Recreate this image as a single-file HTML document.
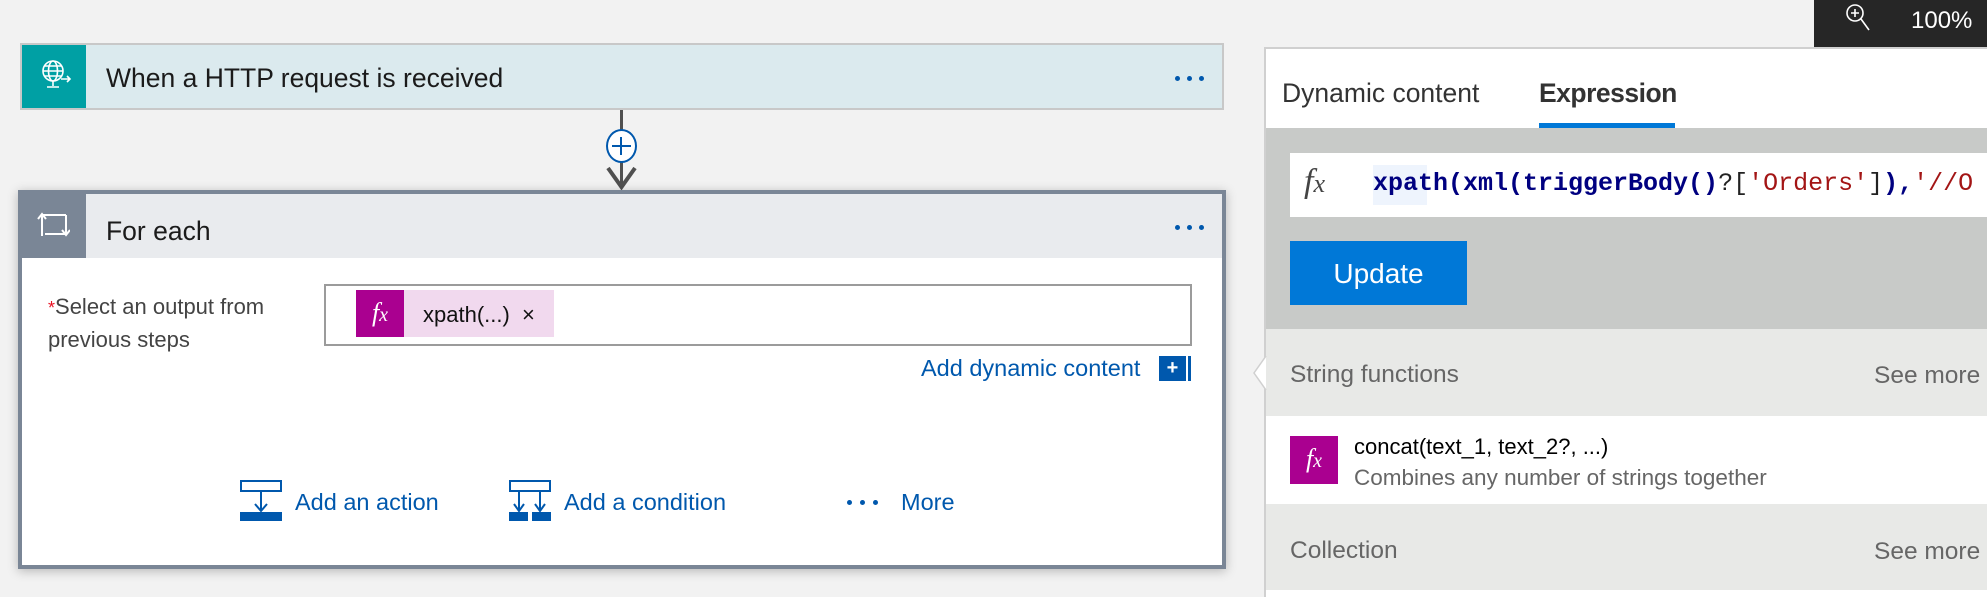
<!DOCTYPE html>
<html><head><meta charset="utf-8"><style>
*{margin:0;padding:0;box-sizing:border-box}
body{width:1987px;height:597px;overflow:hidden;background:#f2f2f2;font-family:"Liberation Sans",sans-serif;position:relative}
.abs{position:absolute}
.dots{position:absolute;display:flex;gap:7px}
.dots i{width:5px;height:5px;border-radius:50%;background:#0058ad;display:block}
</style></head><body>

<div class="abs" style="left:20px;top:43px;width:1204px;height:67px;background:#dbeaee;border:2px solid #c8c8c8"></div>
<div class="abs" style="left:22px;top:45px;width:64px;height:63px;background:#00a0a4"></div>
<svg class="abs" style="left:38px;top:58px" width="36" height="36" viewBox="0 0 36 36" fill="none" stroke="#fff" stroke-width="1.6">
<circle cx="15" cy="13" r="10"/><ellipse cx="15" cy="13" rx="4.5" ry="10"/><path d="M5 13h20M6.5 8h17M6.5 18h17M15 23v5M9 29h12M23 21h9M29 18l3 3-3 3"/></svg>
<div class="abs" style="left:106px;top:63px;font-size:26.5px;color:#1b1b1b">When a HTTP request is received</div>
<div class="dots" style="left:1175px;top:76px"><i></i><i></i><i></i></div>

<div class="abs" style="left:620px;top:110px;width:3px;height:76px;background:#505050"></div>
<div class="abs" style="left:606px;top:129px;width:31px;height:34px;border-radius:50%;background:#fff;border:2px solid #0058ad"></div>
<div class="abs" style="left:612px;top:145px;width:19px;height:2px;background:#0058ad"></div>
<div class="abs" style="left:620px;top:137px;width:2px;height:18px;background:#0058ad"></div>
<svg class="abs" style="left:605px;top:165px" width="33" height="26"><path d="M3 3l13.5 19L30 3" stroke="#505050" stroke-width="4" fill="none"/></svg>

<div class="abs" style="left:18px;top:190px;width:1208px;height:379px;background:#fff;border:4px solid #7a8696;box-shadow:0 2px 10px rgba(0,0,0,.25)"></div>
<div class="abs" style="left:22px;top:194px;width:1200px;height:64px;background:#e9ebee"></div>
<div class="abs" style="left:18px;top:190px;width:68px;height:68px;background:#7a8696"></div>
<svg class="abs" style="left:36px;top:210px" width="34" height="28" fill="none" stroke="#fff" stroke-width="2"><path d="M6 26V5h24M2 9l4-5 4 5M30 5v19H9M26 20l4 5 4-5"/></svg>
<div class="abs" style="left:106px;top:216px;font-size:26.5px;color:#1b1b1b">For each</div>
<div class="dots" style="left:1175px;top:225px"><i></i><i></i><i></i></div>

<div class="abs" style="left:48px;top:291px;font-size:22px;color:#444;line-height:31px"><span style="color:#e81123;font-size:18px">*</span>Select an output from<br>previous steps</div>
<div class="abs" style="left:324px;top:284px;width:868px;height:62px;border:2px solid #9b9b9b;background:#fff"></div>
<div class="abs" style="left:356px;top:290px;width:48px;height:47px;background:#aa0090;color:#fff;font-family:'Liberation Serif',serif;font-style:italic;font-size:26px;text-align:center;line-height:45px">f<span style="font-size:20px">x</span></div>
<div class="abs" style="left:404px;top:290px;width:150px;height:47px;background:#f1d9ee;font-size:22px;color:#111;line-height:49px;padding-left:19px">xpath(...)&nbsp;&nbsp;×</div>

<div class="abs" style="left:921px;top:355px;font-size:23.5px;color:#0058ad">Add dynamic content</div>
<div class="abs" style="left:1159px;top:356px;width:27px;height:25px;background:#0058ad;color:#fff;font-size:20px;font-weight:bold;text-align:center;line-height:24px">+</div>
<div class="abs" style="left:1188px;top:356px;width:3px;height:25px;background:#0058ad"></div>

<svg class="abs" style="left:240px;top:480px" width="44" height="42"><rect x="1" y="1" width="40" height="10" fill="none" stroke="#0058ad" stroke-width="2"/><path d="M21 11v19M15 24l6 7 6-7" stroke="#0058ad" stroke-width="2" fill="none"/><rect x="0" y="32" width="42" height="9" fill="#0058ad"/></svg>
<div class="abs" style="left:295px;top:489px;font-size:23.5px;color:#0058ad">Add an action</div>
<svg class="abs" style="left:509px;top:480px" width="44" height="42"><rect x="1" y="1" width="40" height="10" fill="none" stroke="#0058ad" stroke-width="2"/><path d="M10 11v19M5 24l5 7 5-7M31 11v19M26 24l5 7 5-7" stroke="#0058ad" stroke-width="2" fill="none"/><rect x="0" y="32" width="19" height="9" fill="#0058ad"/><rect x="23" y="32" width="19" height="9" fill="#0058ad"/></svg>
<div class="abs" style="left:564px;top:489px;font-size:23.5px;color:#0058ad">Add a condition</div>
<div class="dots" style="left:847px;top:500px;gap:8px"><i></i><i></i><i></i></div>
<div class="abs" style="left:901px;top:489px;font-size:23.5px;color:#0058ad">More</div>

<div class="abs" style="left:1814px;top:0;width:173px;height:47px;background:#262626"></div>
<svg class="abs" style="left:1843px;top:2px" width="32" height="32" fill="none" stroke="#fff" stroke-width="1.6"><circle cx="12" cy="11" r="8"/><path d="M12 7v8M8 11h8M18 17l8 11"/></svg>
<div class="abs" style="left:1911px;top:7px;font-size:24px;color:#fff">100%</div>

<div class="abs" style="left:1264px;top:47px;width:723px;height:550px;background:#fff;border-left:2px solid #d0d0d0;border-top:2px solid #d0d0d0"></div>
<div class="abs" style="left:1282px;top:78px;font-size:26.5px;color:#333">Dynamic content</div>
<div class="abs" style="left:1539px;top:78px;font-size:26.5px;color:#333;font-weight:bold;letter-spacing:-0.5px">Expression</div>
<div class="abs" style="left:1539px;top:123px;width:136px;height:5px;background:#0078d7"></div>
<div class="abs" style="left:1266px;top:128px;width:721px;height:201px;background:#c8cac8"></div>
<div class="abs" style="left:1290px;top:153px;width:697px;height:64px;background:#fff;overflow:hidden;white-space:nowrap">
<span class="abs" style="left:14px;top:10px;font-family:'Liberation Serif',serif;font-style:italic;font-size:34px;color:#444">f<span style="font-size:26px">x</span></span>
<span class="abs" style="left:83px;top:12px;background:#eef4fd;width:54px;height:40px"></span>
<span class="abs" style="left:83px;top:16px;font-family:'Liberation Mono',monospace;font-size:25px;font-weight:bold;color:#000080">xpath(xml(triggerBody()<span style="color:#222;font-weight:normal">?[</span><span style="color:#a31515;font-weight:normal">'Orders'</span><span style="color:#222;font-weight:normal">]</span>),<span style="color:#a31515;font-weight:normal">'//O</span></span>
</div>
<div class="abs" style="left:1290px;top:241px;width:177px;height:64px;background:#0078d7;color:#fff;font-size:28px;text-align:center;line-height:66px">Update</div>

<div class="abs" style="left:1266px;top:329px;width:721px;height:87px;background:#e8e9e7"></div>
<svg class="abs" style="left:1248px;top:356px" width="20" height="34"><path d="M18 0L6 17l12 17" fill="#fff" stroke="#d0d0d0" stroke-width="1.5"/></svg>
<div class="abs" style="left:1290px;top:361px;font-size:24.5px;color:#666">String functions</div>
<div class="abs" style="left:1874px;top:362px;font-size:24.5px;color:#666">See more</div>
<div class="abs" style="left:1290px;top:436px;width:48px;height:48px;background:#aa0090;color:#fff;font-family:'Liberation Serif',serif;font-style:italic;font-size:26px;text-align:center;line-height:46px">f<span style="font-size:20px">x</span></div>
<div class="abs" style="left:1354px;top:434px;font-size:22px;color:#000">concat(text_1, text_2?, ...)</div>
<div class="abs" style="left:1354px;top:465px;font-size:22.5px;color:#666">Combines any number of strings together</div>
<div class="abs" style="left:1266px;top:504px;width:721px;height:86px;background:#e8e9e7"></div>
<div class="abs" style="left:1290px;top:537px;font-size:24.5px;color:#666">Collection</div>
<div class="abs" style="left:1874px;top:538px;font-size:24.5px;color:#666">See more</div>
</body></html>
